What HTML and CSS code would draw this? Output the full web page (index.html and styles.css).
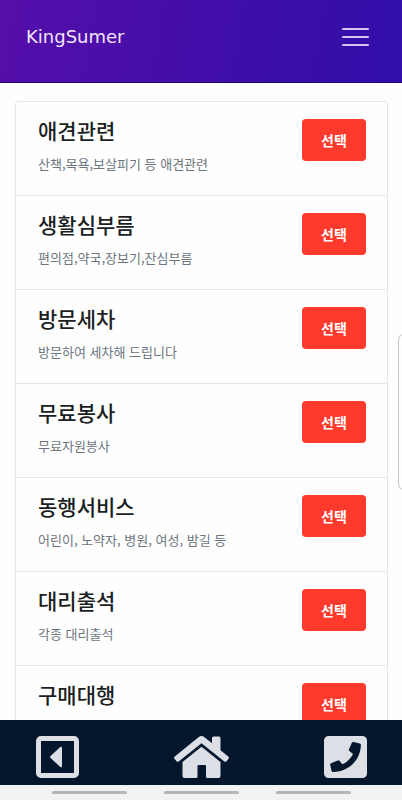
FILE: index.html
```html
<!DOCTYPE html>
<html lang="ko">
<head>
<meta charset="utf-8">
<meta name="viewport" content="width=device-width, initial-scale=1">
<title>KingSumer</title>
<link rel="stylesheet" href="styles.css">
</head>
<body>
<header class="topbar">
  <a class="brand" href="#">KingSumer</a>
  <button class="menu" type="button" aria-label="메뉴"><span></span><span></span><span></span></button>
</header>
<main class="content">
  <ul class="services">
    <li class="service"><div><h2>애견관련</h2><p>산책,목욕,보살피기 등 애견관련</p></div><button class="select" type="button">선택</button></li>
    <li class="service"><div><h2>생활심부름</h2><p>편의점,약국,장보기,잔심부름</p></div><button class="select" type="button">선택</button></li>
    <li class="service"><div><h2>방문세차</h2><p>방문하여 세차해 드립니다</p></div><button class="select" type="button">선택</button></li>
    <li class="service"><div><h2>무료봉사</h2><p>무료자원봉사</p></div><button class="select" type="button">선택</button></li>
    <li class="service"><div><h2>동행서비스</h2><p>어린이, 노약자, 병원, 여성, 밤길 등</p></div><button class="select" type="button">선택</button></li>
    <li class="service"><div><h2>대리출석</h2><p>각종 대리출석</p></div><button class="select" type="button">선택</button></li>
    <li class="service"><div><h2>구매대행</h2></div><button class="select" type="button">선택</button></li>
  </ul>
</main>
<nav class="tabs">
  <a href="#" aria-label="뒤로">
    <svg width="43" height="42" viewBox="0 0 43 42"><rect x="2.5" y="2.5" width="38" height="37" rx="2.5" fill="none" stroke="currentColor" stroke-width="5"/><path d="M14.6 20 24 11.3q2-1.6 2 .7v18q0 2.300-2 .7L14.600 22q-1.200-1 0-2z" fill="currentColor"/></svg>
  </a>
  <a href="#" aria-label="홈">
    <svg width="55" height="42" viewBox="0 0 55 42"><g fill="currentColor"><path d="M24.500 1.200q3-2.200 6 0L38 7.300V2q0-1.500 1.500-1.500h5.500q1.500 0 1.500 1.500v12.200l7.700 6.300q1.200 1 .3 2.200l-2 2.500q-1 1.200-2.200.200L27.500 7.300 4.700 25.400q-1.200 1-2.200-.2l-2-2.500q-1-1.200.3-2.200z"/><path d="M27.500 10.800 46.500 26v14q0 2-2 2h-11q-1.500 0-1.500-1.500V30q0-1-1-1h-6.500q-1 0-1 1v10.500Q23.500 42 22 42H10.500q-2 0-2-2V26z"/></g></svg>
  </a>
  <a href="#" aria-label="전화">
    <svg width="43" height="42" viewBox="0 32 448 448" preserveAspectRatio="none"><path fill="currentColor" d="M400 32H48A48 48 0 0 0 0 80v352a48 48 0 0 0 48 48h352a48 48 0 0 0 48-48V80a48 48 0 0 0-48-48zM94 416c-7.033 0-13.057-4.873-14.616-11.627l-14.998-65a15 15 0 0 1 8.707-17.160l69.998-29.999a15 15 0 0 1 17.518 4.289l30.997 37.885c48.944-22.963 88.297-62.858 110.781-110.780l-37.886-30.997a15.001 15.001 0 0 1-4.289-17.518l30-69.998a15 15 0 0 1 17.160-8.707l65 14.998A14.997 14.997 0 0 1 384 126c0 160.292-129.945 290-290 290z"/></svg>
  </a>
</nav>
<div class="gestures"><span></span><span></span><span></span></div>
<div class="edge-handle"></div>
</body>
</html>
```
FILE: styles.css
```css
* {
  box-sizing: border-box;
}

body {
  position: relative;
  display: flex;
  flex-direction: column;
  height: 100vh;
  margin: 0;
  overflow: hidden;
  background: #fefefe;
  color: #1b1e22;
  font-family: "Noto Sans CJK KR", sans-serif;
}

.topbar {
  display: flex;
  flex: none;
  align-items: center;
  justify-content: space-between;
  padding: 20px 33px 28px 26px;
  border-bottom: 1px solid #1d0872;
  background: linear-gradient(100deg, #550eaa, #300ea8);
}

.brand {
  color: #f3e4fb;
  font: 18px/24px "DejaVu Sans", sans-serif;
  text-decoration: none;
}

.menu {
  display: flex;
  flex-direction: column;
  gap: 6px;
  padding: 8px 0;
  border: 0;
  background: none;
}

.menu span {
  width: 27px;
  height: 2px;
  border-radius: 1px;
  background: #d6c4f2;
}

.content {
  flex: 1;
  min-height: 0;
  padding: 18px 14px 0 15px;
  overflow-y: auto;
  scrollbar-width: none;
}

.services {
  margin: 0;
  padding: 0;
  border: 1px solid #e6e6e8;
  border-radius: 3px;
  list-style: none;
}

.service {
  display: flex;
  align-items: flex-start;
  justify-content: space-between;
  padding: 17px 21px 19px 22px;
}

.service + .service {
  border-top: 1px solid #e6e6e8;
}

.service h2 {
  margin: 0 0 11px;
  font-size: 21px;
  font-weight: 500;
  line-height: 22px;
}

.service p {
  margin: 0;
  color: #6c757d;
  font-size: 13px;
  line-height: 24px;
}

.select {
  flex: none;
  width: 64px;
  height: 42px;
  padding: 0;
  border: 0;
  border-radius: 4px;
  background: #fe3a2d;
  color: #fff;
  font: bold 14px/20px "Noto Sans CJK KR", sans-serif;
}

.tabs {
  display: flex;
  flex: none;
  justify-content: space-between;
  padding: 16px 35px 7px 36px;
  background: #03162b;
}

.tabs a {
  display: flex;
  color: #dcdfe6;
}

.gestures {
  display: flex;
  flex: none;
  justify-content: center;
  gap: 37px;
  padding: 6px 0;
  background: #f2f2f3;
}

.gestures span {
  width: 75px;
  height: 3px;
  border-radius: 2px;
  background: #b5b5b5;
}

.edge-handle {
  position: absolute;
  top: 334px;
  right: -8px;
  width: 12px;
  height: 156px;
  border: 1px solid #c4c4c4;
  border-radius: 6px;
}
```
